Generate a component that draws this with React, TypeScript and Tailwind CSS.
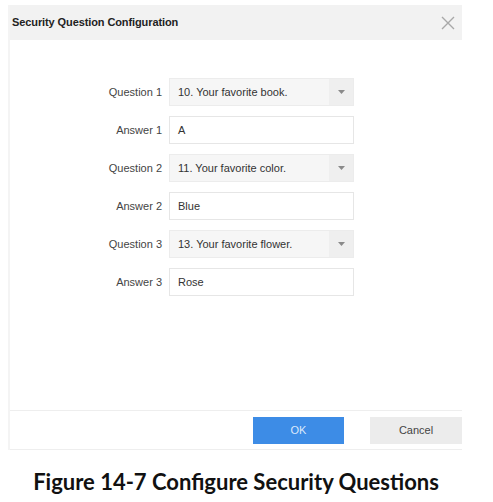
import React from "react";

const rows: { label: string; value: string; select: boolean }[] = [
  { label: "Question 1", value: "10. Your favorite book.", select: true },
  { label: "Answer 1", value: "A", select: false },
  { label: "Question 2", value: "11. Your favorite color.", select: true },
  { label: "Answer 2", value: "Blue", select: false },
  { label: "Question 3", value: "13. Your favorite flower.", select: true },
  { label: "Answer 3", value: "Rose", select: false },
];

export default function App() {
  return (
    <div className="w-[493px] h-[502px] bg-white overflow-hidden" style={{ fontFamily: '"Liberation Sans", Arial, sans-serif' }}>
      <div className="pt-[5px] pl-[8px] w-[462px]">
        <div className="flex flex-col w-[454px] h-[445px] border-l-2 border-[#f4f4f4]">
          <div className="h-[35px] bg-[#f2f2f2] flex items-center justify-between pl-[2px] pr-[6px]">
            <span className="text-[11px] font-bold text-[#222] tracking-[-0.1px]">Security Question Configuration</span>
            <svg width="16" height="16" viewBox="0 0 16 16" className="mt-[1px]">
              <path d="M2 2 L14 14 M14 2 L2 14" stroke="#a8a8a8" strokeWidth="1.4" />
            </svg>
          </div>
          <div className="flex-1 flex flex-col pt-[38px] gap-[10px]">
            {rows.map((r) => (
              <div key={r.label} className="flex items-center h-[28px]">
                <div className="w-[159px] text-right pr-[7px] text-[11px] text-[#444]">{r.label}</div>
                <div
                  className={
                    r.select
                      ? "w-[185px] h-[28px] bg-[#f6f6f6] border border-[#ececec] flex items-center"
                      : "w-[185px] h-[28px] bg-white border border-[#e6e6e6] flex items-center"
                  }
                >
                  <span className="flex-1 pl-[8px] text-[11px] text-[#333]">{r.value}</span>
                  {r.select && (
                    <div className="w-[24px] h-full flex items-center justify-center bg-[#efefef]">
                      <svg width="7" height="4" viewBox="0 0 7 4">
                        <path d="M0 0 L7 0 L3.5 4 Z" fill="#8a8a8a" />
                      </svg>
                    </div>
                  )}
                </div>
              </div>
            ))}
          </div>
          <div className="h-[40px] border-t border-b border-[#eeeeee] flex items-center justify-end gap-[26px]">
            <div className="w-[91px] h-[27px] bg-[#3d8ce6] flex items-center justify-center text-[11px] text-[#dce9fb]">OK</div>
            <div className="w-[92px] h-[27px] bg-[#ececec] flex items-center justify-center text-[11px] text-[#444]">Cancel</div>
          </div>
        </div>
      </div>
      <div className="mt-[15px] text-center text-[22px] font-bold text-[#111] pr-[21px]" style={{ fontFamily: "Lato, sans-serif" }}>
        Figure 14-7 Configure Security Questions
      </div>
    </div>
  );
}
